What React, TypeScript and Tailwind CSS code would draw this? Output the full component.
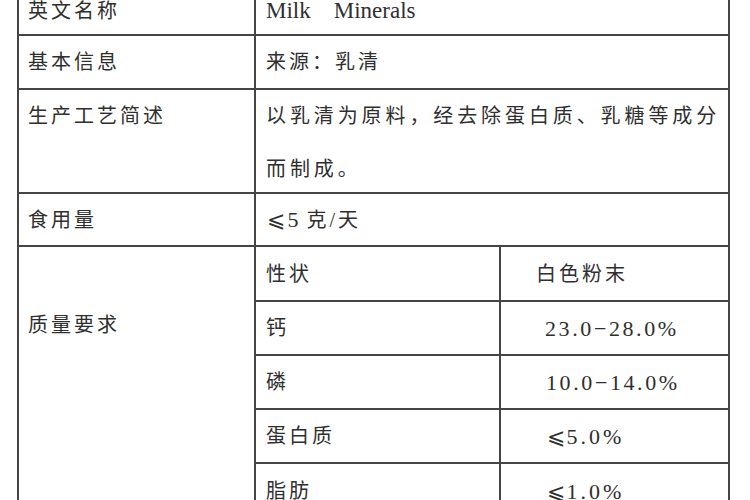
import React from "react";

const F = "font-['Liberation_Serif','Noto_Sans_CJK_SC',serif]";
const LE = "font-['DejaVu_Serif','DejaVu_Sans',serif] text-[22px] tracking-[1px]";

export default function App() {
  return (
    <div className={`w-[750px] h-[500px] overflow-hidden bg-white text-[#2f2f2f] ${F}`}>
      <div className="ml-[17px] w-[713px] border-x-2 border-[#454545]">
        {/* Row 1 */}
        <div className="flex h-[36px] border-b-2 border-[#454545]">
          <div className="w-[237px] shrink-0 border-r-2 border-[#454545] pl-[9px] pt-[1px] text-[20px] leading-[20px] tracking-[3px]">
            英文名称
          </div>
          <div className="flex-1 pl-[10px] pt-[1px] text-[23px] leading-[20px]">
            <span>Milk</span>
            <span className="ml-[23px]">Minerals</span>
          </div>
        </div>
        {/* Row 2 */}
        <div className="flex h-[54px] border-b-2 border-[#454545]">
          <div className="w-[237px] shrink-0 border-r-2 border-[#454545] pl-[9px] flex items-center text-[20px] tracking-[3px]">
            基本信息
          </div>
          <div className="flex-1 pl-[10px] flex items-center text-[20px] tracking-[3px]">
            来源：乳清
          </div>
        </div>
        {/* Row 3 */}
        <div className="flex h-[104px] border-b-2 border-[#454545]">
          <div className="w-[237px] shrink-0 border-r-2 border-[#454545] pl-[9px] text-[20px] leading-[53px] tracking-[3px]">
            生产工艺简述
          </div>
          <div className="flex-1 pl-[10px] text-[20px] leading-[53px] tracking-[3.9px] whitespace-nowrap">
            以乳清为原料，经去除蛋白质、乳糖等成分
            <br />
            而制成。
          </div>
        </div>
        {/* Row 4 */}
        <div className="flex h-[53px] border-b-2 border-[#454545]">
          <div className="w-[237px] shrink-0 border-r-2 border-[#454545] pl-[9px] flex items-center text-[20px] tracking-[3px]">
            食用量
          </div>
          <div className="flex-1 pl-[11px] flex items-center text-[20px] tracking-[3px]">
            <span className={LE}>⩽</span>
            <span className="text-[22px] ml-[1px]">5</span>
            <span className="ml-[5px]">克/天</span>
          </div>
        </div>
        {/* Quality */}
        <div className="flex">
          <div className="w-[237px] shrink-0 border-r-2 border-[#454545] pl-[9px] pt-[68px] text-[20px] leading-[20px] tracking-[3px]">
            质量要求
          </div>
          <div className="flex-1 flex flex-col">
            <SubRow name="性状" h="h-[55px]" border>
              <span className="pl-[35px] text-[20px] tracking-[3px]">白色粉末</span>
            </SubRow>
            <SubRow name="钙" h="h-[54px]" border>
              <span className="pl-[44px] text-[22px] tracking-[2.6px]">23.0−28.0%</span>
            </SubRow>
            <SubRow name="磷" h="h-[54px]" border>
              <span className="pl-[45px] text-[22px] tracking-[2.6px]">10.0−14.0%</span>
            </SubRow>
            <SubRow name="蛋白质" h="h-[54px]" border>
              <span className="pl-[46px] text-[22px] tracking-[3px]">
                <span className={LE}>⩽</span>5.0%
              </span>
            </SubRow>
            <SubRow name="脂肪" h="h-[54px]">
              <span className="pl-[46px] text-[22px] tracking-[3px]">
                <span className={LE}>⩽</span>1.0%
              </span>
            </SubRow>
          </div>
        </div>
      </div>
    </div>
  );
}

function SubRow({
  name,
  h,
  border,
  children,
}: {
  name: string;
  h: string;
  border?: boolean;
  children: React.ReactNode;
}) {
  return (
    <div className={`flex ${h} ${border ? "border-b-2 border-[#454545]" : ""}`}>
      <div className="w-[245px] shrink-0 border-r-2 border-[#454545] pl-[10px] flex items-center text-[20px] tracking-[3px]">
        {name}
      </div>
      <div className="flex-1 flex items-center">{children}</div>
    </div>
  );
}
